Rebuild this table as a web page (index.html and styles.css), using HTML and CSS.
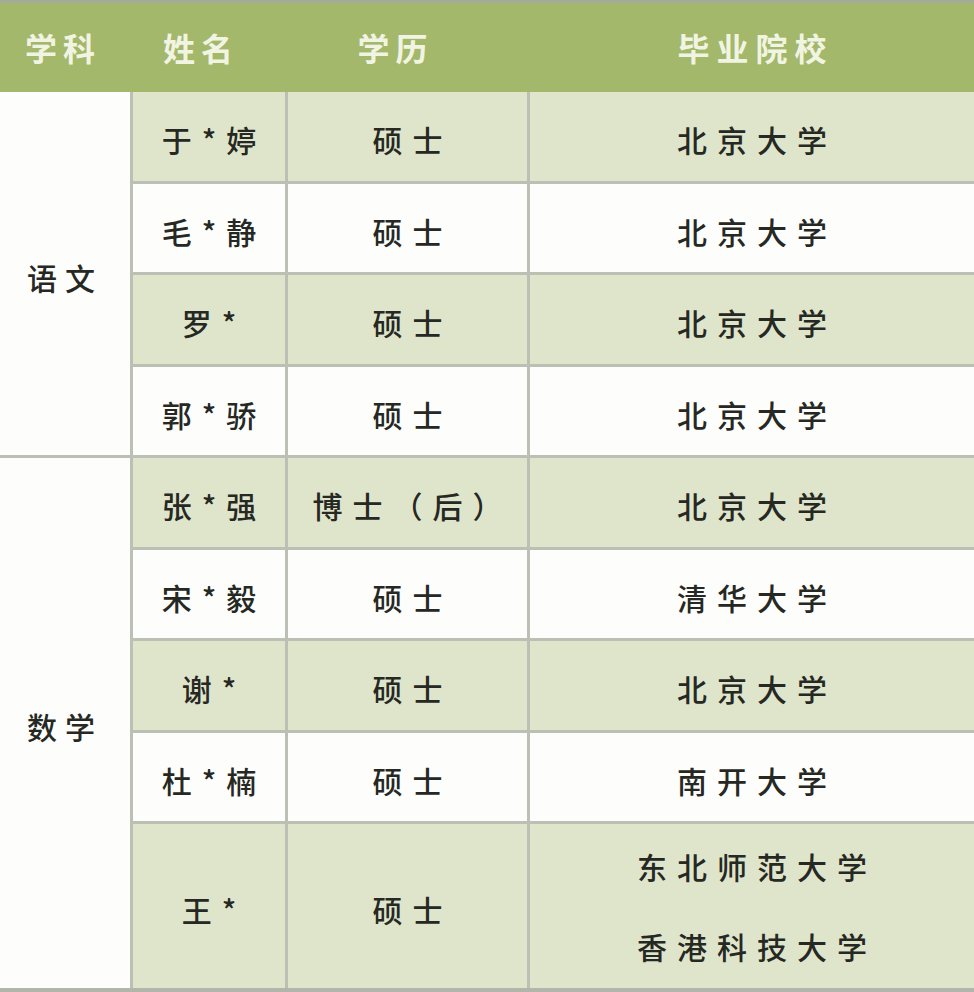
FILE: index.html
```html
<!DOCTYPE html>
<html lang="zh-CN">
<head>
<meta charset="utf-8">
<title>教师名单</title>
<link rel="stylesheet" href="styles.css">
</head>
<body>
<div class="page">
  <div class="head">
    <div class="h h-subj">学科</div>
    <div class="h h-name">姓名</div>
    <div class="h h-deg">学历</div>
    <div class="h h-school">毕业院校</div>
  </div>
  <div class="grid">
    <div class="cell subj subj-a">语文</div>
    <div class="cell g">于*婷</div><div class="cell g">硕士</div><div class="cell g">北京大学</div>
    <div class="cell w">毛*静</div><div class="cell w">硕士</div><div class="cell w">北京大学</div>
    <div class="cell g">罗*</div><div class="cell g">硕士</div><div class="cell g">北京大学</div>
    <div class="cell w">郭*骄</div><div class="cell w">硕士</div><div class="cell w">北京大学</div>
    <div class="cell subj subj-b">数学</div>
    <div class="cell g">张*强</div><div class="cell g">博士（后）</div><div class="cell g">北京大学</div>
    <div class="cell w">宋*毅</div><div class="cell w">硕士</div><div class="cell w">清华大学</div>
    <div class="cell g">谢*</div><div class="cell g">硕士</div><div class="cell g">北京大学</div>
    <div class="cell w">杜*楠</div><div class="cell w">硕士</div><div class="cell w">南开大学</div>
    <div class="cell g">王*</div><div class="cell g">硕士</div><div class="cell g multi"><span>东北师范大学</span><span>香港科技大学</span></div>
  </div>
  <div class="foot"></div>
</div>
</body>
</html>
```
FILE: styles.css
```css
html, body {
  margin: 0;
  padding: 0;
  background: #fdfdfc;
}
.page {
  width: 974px;
  height: 992px;
  overflow: hidden;
  font-family: "Noto Sans CJK SC", "Noto Sans", sans-serif;
}
.head {
  height: 89px;
  border-top: 3px solid #a4ab98;
  background: #a3b86a;
  display: grid;
  grid-template-columns: 130px 152px 239px 1fr;
  column-gap: 3px;
  align-items: center;
}
.h {
  color: #f1f4e2;
  font-size: 32px;
  font-weight: 700;
  letter-spacing: 6px;
  text-indent: 6px;
  text-align: center;
  line-height: 1;
  padding-bottom: 2px;
}
.h-subj { padding-right: 10px; }
.h-name { padding-right: 22px; }
.h-deg { padding-right: 30px; }
.h-school { letter-spacing: 7px; text-indent: 7px; }
.grid {
  display: grid;
  grid-template-columns: 130px 152px 239px 1fr;
  grid-template-rows: repeat(8, 88.5px) 164px;
  gap: 3px;
  background: #bcc0b4;
}
.cell {
  display: flex;
  align-items: center;
  justify-content: center;
  font-size: 30px;
  font-weight: 500;
  color: #262823;
  letter-spacing: 10px;
  text-indent: 10px;
  line-height: 1;
  padding-top: 6px;
  box-sizing: border-box;
}
.g { background: #dfe5cb; }
.w { background: #fdfdfc; }
.subj {
  background: #fdfdfc;
  grid-column: 1;
  letter-spacing: 8px;
  text-indent: 0;
  padding-right: 0;
}
.subj-a { grid-row: 1 / span 4; }
.subj-b { grid-row: 5 / span 5; }
.multi {
  flex-direction: column;
  gap: 50px;
  padding-top: 0;
}
.multi span { display: block; }
.foot {
  height: 4px;
  background: #b2b6aa;
}
```
